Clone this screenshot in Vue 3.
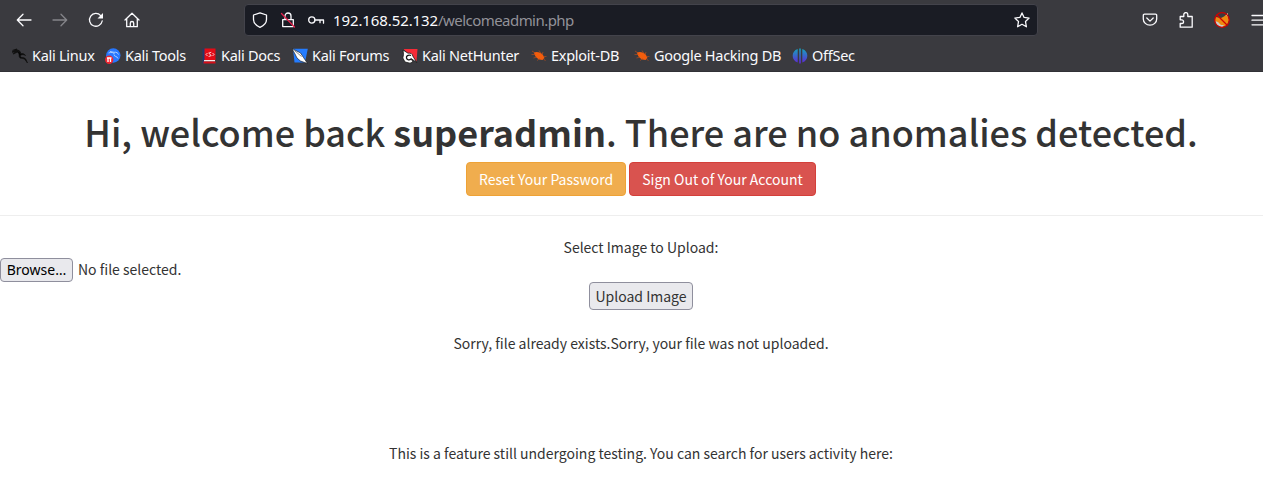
<script setup>
const bookmarks = [
  { label: 'Kali Linux', icon: 'linux' },
  { label: 'Kali Tools', icon: 'tools' },
  { label: 'Kali Docs', icon: 'docs' },
  { label: 'Kali Forums', icon: 'forums' },
  { label: 'Kali NetHunter', icon: 'hunter' },
  { label: 'Exploit-DB', icon: 'bug' },
  { label: 'Google Hacking DB', icon: 'bug' },
  { label: 'OffSec', icon: 'offsec' },
]
</script>

<template>
  <div class="window">
    <header class="chrome">
      <div class="toolbar">
        <div class="nav">
          <svg viewBox="0 0 16 16"><path d="M15 8H1.5M7 2.2 1.3 8 7 13.8" /></svg>
          <svg class="dim" viewBox="0 0 16 16"><path d="M1 8h13.5M9 2.2 14.7 8 9 13.8" /></svg>
          <svg viewBox="0 0 16 16"><path d="M14.2 9A6.4 6.4 0 1 1 12.7 3.6" /><path d="M15 1v5.5H9.5z" fill="#fbfbfe" stroke="none" /></svg>
          <svg viewBox="0 0 16 16"><path d="M1 8 8 1.2 15 8M2.7 6.8v7.9h10.6V6.8M6.3 14.5v-3.300a1.700 1.700 0 0 1 3.400 0v3.300" /></svg>
        </div>
        <div class="urlbar">
          <svg viewBox="0 0 16 16"><path d="M8 .8 14.500 3v4.500c0 3.700-2.300 6-6.500 7.800-4.200-1.800-6.500-4.100-6.500-7.800V3z" /></svg>
          <svg class="lock" viewBox="0 0 16 16"><path d="M2.700 7.600h10.600v7H2.700zM5 7.400V4a3 3 0 0 1 6 0v3.400" /><path class="slash" d="m1.500 1.500 13 13.500" /></svg>
          <svg class="key" viewBox="0 0 18 16"><circle cx="4.800" cy="8" r="3.100" /><path d="M8 8h8.500v3.200M13 8v2.700" /></svg>
          <span class="address"><span class="host">192.168.52.132</span><span class="path">/welcomeadmin.php</span></span>
          <svg class="star" viewBox="0 0 16 16"><path d="m8 .9 2.100 4.500 5 .65-3.600 3.500.9 5.200L8 12.300l-4.400 2.450.9-5.200L.9 6.050l5-.65z" /></svg>
        </div>
        <div class="actions">
          <svg viewBox="0 0 16 16"><path d="M2.500 2.200h11a1.200 1.200 0 0 1 1.200 1.200v3.500a6.700 6.300 0 0 1-13.400 0V3.400a1.200 1.200 0 0 1 1.200-1.200z" /><path d="M4.800 6 8 9.100 11.200 6" /></svg>
          <svg viewBox="0 0 16 16"><path d="M2.200 15.200V11.500h1.500a1.800 1.800 0 0 0 0-3.700H2.200V4.500h3.600V2.600a2 2 0 0 1 4 0v1.900h4.400v10.700z" /></svg>
          <svg viewBox="0 0 16 16">
            <path d="m1 5 2 .3 4 .7 3-1.500L14 1v4l1 3-2 5-5 2.500L3 13 1 9z" fill="#ed8b10" class="fur" />
            <path d="m1 9 3 1 3 3 3 0-2 2.500L3 13zM12 3l2-2-.5 4z" fill="#c7cac9" class="fur" />
            <circle class="ban" cx="8" cy="8" r="7.300" /><path class="ban" d="m3 3 10 10" />
          </svg>
          <svg viewBox="0 0 16 16"><path d="M2 3.500h14M2 8.200h14M2 12.800h14" /></svg>
        </div>
      </div>
      <nav class="bookmarks">
        <a v-for="(b, i) in bookmarks" :key="i" class="bookmark">
          <svg v-if="b.icon === 'linux'" viewBox="0 0 16 16">
            <path d="M.5 2.500 5 1.200M0 4l6-1M1 6l4-2M3 2c4 0 5 1 5.500 3.500" stroke="#111" />
            <path d="M4 3.200C7 3 8 4 8.500 5.800c2-.5 4 0 5 1.700l-1.500-.7c-2-.5-4 .1-3.500 1.800C9 10.200 13 9 14 11.500l1.500 3.500-3-4C11 10.200 7.500 11 7.200 8.500 7 6.500 7.500 5 4 3.200z" fill="#050505" stroke="#111" stroke-width=".7" />
          </svg>
          <svg v-else-if="b.icon === 'tools'" viewBox="0 0 16 16">
            <circle cx="8.300" cy="7.500" r="7.200" fill="#2777ff" />
            <path d="M3.500 5c3-1 5-.5 6 1M5 3.500l4 .8c2.500-.5 4 .8 4.500 2.200M9 6.500c0 2.500 3.500 1.500 4 4" stroke="#b8d6ff" stroke-width=".9" />
            <circle cx="4.200" cy="11.800" r="4.200" fill="#ee2631" />
            <path d="M2 10h4.500M3 10v4M5.500 10v4" stroke="#fff" />
          </svg>
          <svg v-else-if="b.icon === 'docs'" viewBox="0 0 16 16">
            <path d="M1.500.5H4v15H1.500z" fill="#22386e" /><path d="M3.500.5h11v11.500h-11z" fill="#e40b16" /><path d="M3 12h11v1.500H3z" fill="#f4e9e9" /><path d="M2.500 13.500h12v2h-12z" fill="#d80d17" />
            <path d="M6.500 5 5 6.500 6.500 8M11.500 5 13 6.500 11.500 8M10.300 4.300l-2.600.8 2.600 2.500-2.700.9" stroke="#fff" stroke-width=".8" />
          </svg>
          <svg v-else-if="b.icon === 'forums'" viewBox="0 0 16 16">
            <path d="M1 .8h14.800L13 14.500H2.500z" fill="#247cff" />
            <path d="m0 .5 8.500 4.500 3 4.500 4 6-7-2.500-3.500-3L3 6z" fill="#fff" stroke="#111" stroke-width=".6" /><path d="m2.500 2.500 7 6" stroke="#333" stroke-width=".6" />
          </svg>
          <svg v-else-if="b.icon === 'hunter'" viewBox="0 0 16 16">
            <path d="M1.500 1h14l-1 12.500L9 9z" fill="#f62b37" />
            <path d="M1 2 6 5.200c3-.4 4.500.8 4.800 2.800l4 6.500L9 10.500 11 14l-3 1.200L3 14 .8 10l.7-3.500z" fill="#fff" stroke="#151515" stroke-width=".8" />
            <path d="M9 7.500c-3-1-5 .5-4.500 2.500.5 2.200 3 2.500 4.500 1" stroke="#171717" stroke-width="1.300" />
          </svg>
          <svg v-else-if="b.icon === 'bug'" viewBox="0 0 16 16">
            <path d="M3 4.500c3-1.500 7 0 9 2.500l1.500 3-2 2C7 12 3.500 8.500 3 4.500z" fill="#f45d0c" />
            <path d="m1 3 3 2M.5 6.500h4M2.500 10l3.500-1M6 12.500l3-2M8 2.500l2 3M12 4l-1 3M12 8.500h3.500M12 10l2.500 3" stroke="#c64f17" stroke-width=".6" />
          </svg>
          <svg v-else viewBox="0 0 16 16">
            <defs><linearGradient id="violet-blue" x1="0" y1="0" x2="0" y2="16" gradientUnits="userSpaceOnUse"><stop stop-color="#11a8bd" /><stop offset="1" stop-color="#6420d6" /></linearGradient></defs>
            <path d="M5.700 1C-1 3-1 12.500 5.700 14.500zM10.300 1c6.700 2 6.700 11.500 0 13.500zM7.200.5h1.600v15H7.200z" fill="url(#violet-blue)" />
          </svg>
          <span class="label">{{ b.label }}</span>
        </a>
      </nav>
    </header>

    <main class="page">
      <h1>Hi, welcome back <b>superadmin</b>. There are no anomalies detected.</h1>
      <div class="account">
        <a class="btn warning">Reset Your Password</a>
        <a class="btn danger">Sign Out of Your Account</a>
      </div>
      <hr>
      <p class="prompt">Select Image to Upload:</p>
      <div class="file"><button class="browse">Browse…</button><span class="filename">No file selected.</span></div>
      <button class="upload">Upload Image</button>
      <p class="result">Sorry, file already exists.Sorry, your file was not uploaded.</p>
      <p class="testing">This is a feature still undergoing testing. You can search for users activity here:</p>
    </main>
  </div>
</template>

<style>
body { margin: 0; overflow: hidden; background: #fff; }
</style>

<style scoped>
* { box-sizing: border-box; }
.window { width: 1263px; height: 484px; overflow: hidden; }
.chrome { height: 72px; background: #3a3a3f; border-bottom: 1px solid #313136; color: #fbfbfe; font: 15px/20px "Noto Sans", sans-serif; }
svg { display: block; flex: none; width: 16px; height: 16px; fill: none; stroke-width: 1.3; }
.toolbar svg { stroke: #fbfbfe; stroke-linecap: round; stroke-linejoin: round; }
.toolbar { display: flex; align-items: center; height: 40px; }
.nav { display: flex; flex: none; gap: 20px; width: 244px; padding-left: 16px; }
.toolbar .nav .dim { stroke: #85858a; }
.urlbar { display: flex; flex: none; align-items: center; width: 794px; height: 32px; padding: 0 7px; background: #1a1c24; border: 1px solid #43434b; border-radius: 4px; }
.urlbar .lock { margin-left: 12px; }
.toolbar .lock .slash { stroke: #e2214c; }
.urlbar .key { width: 18px; margin-left: 11px; }
.address { margin-left: 8px; color: #929299; white-space: nowrap; }
.host { color: #fbfbfe; letter-spacing: -0.1px; }
.path { letter-spacing: -0.55px; }
.star { margin-left: auto; }
.actions { display: flex; flex: none; gap: 20px; margin-left: 104px; }
.fur { stroke: none; }
.ban { stroke: #d00000; stroke-width: 1.2; }
.bookmarks { display: grid; grid-template-columns: 93px 96px 91px 110px 129px 103px 158px 80px; padding-left: 12px; height: 31px; align-items: center; }
.bookmark { display: flex; align-items: center; gap: 4px; white-space: nowrap; font-size: 14.5px; letter-spacing: -0.27px; }
.label { padding-bottom: 2px; }
.page { width: 1282px; padding-top: 41px; color: #333; text-align: center; font: 14px/22px "Noto Sans CJK SC", sans-serif; }
h1 { margin: 0; height: 49px; font-size: 36px; line-height: 36px; font-weight: 500; white-space: nowrap; }
h1 b { font-weight: 700; }
.account { display: flex; justify-content: center; gap: 3px; }
.btn { height: 34px; padding: 0 12px; border: 1px solid; border-radius: 4px; color: #fff; line-height: 33px; white-space: nowrap; }
.warning { width: 160px; background: #f0ad4e; border-color: #eea236; }
.danger { width: 187px; background: #d9534f; border-color: #d43f3a; }
hr { margin: 19px 0 20px; border: 0; border-top: 1px solid #eee; }
p { margin: 0; }
.file { display: flex; align-items: center; gap: 5px; height: 24px; }
.filename { padding-bottom: 2px; }
button { padding: 0; background: #e9e9ed; border: 1px solid #8f8f9d; border-radius: 4px; white-space: nowrap; }
.browse { width: 73px; height: 24px; color: #000; font: 14px/20px "Noto Sans", sans-serif; }
.upload { display: block; width: 104px; height: 28px; margin: 0 auto; color: #333; font: 14px/26px "Noto Sans CJK SC", sans-serif; }
.prompt { height: 22px; }
.result { margin-top: 22px; }
.testing { margin-top: 88px; }
</style>
